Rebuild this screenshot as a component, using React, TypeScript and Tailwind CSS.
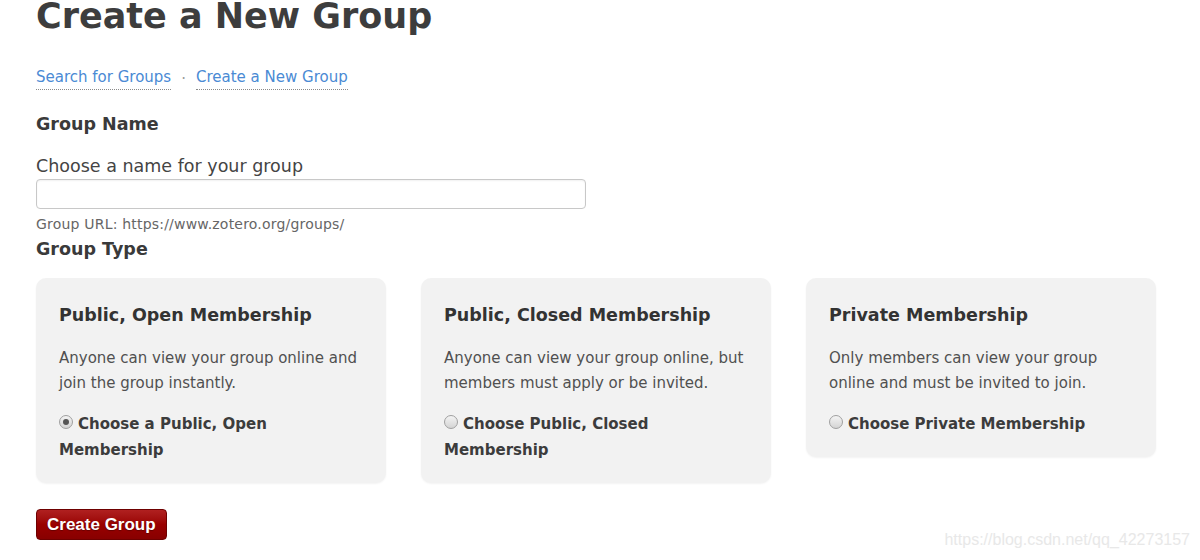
import React from 'react';

const font = "font-['DejaVu_Sans',Verdana,sans-serif]";

const Radio: React.FC<{ checked?: boolean }> = ({ checked }) => (
  <span className="relative -top-[3px] mr-[5px] inline-flex h-[14px] w-[14px] shrink-0 items-center justify-center rounded-full border border-[#a0a0a0] bg-gradient-to-b from-[#f4f4f4] to-[#d4d4d4] align-middle">
    {checked && <span className="h-[6px] w-[6px] rounded-full bg-[#555]"></span>}
  </span>
);

const App: React.FC = () => {
  const types = [
    {
      title: "Public, Open Membership",
      desc: "Anyone can view your group online and join the group instantly.",
      choice: "Choose a Public, Open Membership",
      checked: true
    },
    {
      title: "Public, Closed Membership",
      desc: "Anyone can view your group online, but members must apply or be invited.",
      choice: "Choose Public, Closed Membership",
      checked: false
    },
    {
      title: "Private Membership",
      desc: "Only members can view your group online and must be invited to join.",
      choice: "Choose Private Membership",
      checked: false
    }
  ];

  return (
    <div className={`relative h-[560px] w-[1200px] overflow-hidden bg-white pl-[36px] text-[#3c3c3c] ${font}`}>
      <h1 className="-mt-[5px] text-[35px] font-bold leading-[42px] text-[#3d3d3d]">Create a New Group</h1>

      <div className="mt-[30px] flex items-center text-[15px] leading-[20px] text-[#4a8ad4]">
        <a className="inline-block border-b border-dotted border-[#8a8a8a] pb-[2px]">Search for Groups</a>
        <span className="mx-[10px] text-[#9a9a9a]">·</span>
        <a className="inline-block border-b border-dotted border-[#8a8a8a] pb-[2px]">Create a New Group</a>
      </div>

      <h2 className="mt-[22px] text-[17.5px] font-bold leading-[24px] text-[#3a3a3a]">Group Name</h2>

      <label className="mt-[18px] block text-[17.5px] leading-[24px] text-[#444]">Choose a name for your group</label>
      <input type="text" className="mt-[1px] block h-[30px] w-[550px] rounded-[4px] border border-[#c8c8c8] bg-white shadow-[inset_0_1px_2px_rgba(0,0,0,0.06)] outline-none" />
      <p className="mt-[6px] text-[14px] leading-[18px] tracking-[0.2px] text-[#666]">Group URL: https://www.zotero.org/groups/</p>

      <h2 className="mt-[4px] text-[17.5px] font-bold leading-[24px] text-[#3a3a3a]">Group Type</h2>

      <div className="mt-[17px] grid w-[1120px] grid-cols-3 items-start gap-[35px]">
        {types.map((t, i) => (
          <div key={i} className="rounded-[10px] bg-[#f2f2f2] px-[23px] pt-[25px] pb-[20px] shadow-[0_1px_2px_rgba(0,0,0,0.05)]">
            <h3 className="text-[17.5px] font-bold leading-[25px] text-[#333]">{t.title}</h3>
            <p className="mt-[18px] text-[15px] leading-[25px] text-[#505050]">{t.desc}</p>
            <p className="mt-[15px] text-[15px] font-bold leading-[26px] text-[#3c3c3c]">
              <Radio checked={t.checked} />
              {t.choice}
            </p>
          </div>
        ))}
      </div>

      <button className="mt-[26px] block h-[31px] rounded-[4px] border border-[#6e0000] bg-gradient-to-b from-[#b02020] via-[#990000] to-[#880000] px-[10px] font-['Liberation_Sans',Arial,sans-serif] text-[17px] font-bold text-white [text-shadow:0_1px_1px_rgba(0,0,0,0.3)]">
        Create Group
      </button>

      <div className="absolute right-[10px] bottom-[8px] font-['Liberation_Sans',Arial,sans-serif] text-[16px] text-[#e8e8e8]">
        https://blog.csdn.net/qq_42273157
      </div>
    </div>
  );
};

export default App;
